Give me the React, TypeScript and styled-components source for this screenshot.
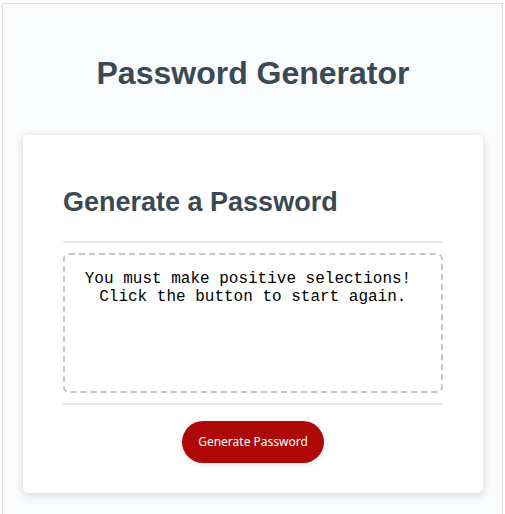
import React from "react";
import styled, { createGlobalStyle } from "styled-components";

const GlobalStyle = createGlobalStyle`
  html, body {
    margin: 0;
    padding: 0;
    background: #ffffff;
  }
  body {
    font-family: "Liberation Sans", Arial, sans-serif;
  }
  * { box-sizing: border-box; }
`;

const Frame = styled.div`
  margin: 3px 2px 0 2px;
  border: 1px solid #dedfe0;
  border-bottom: none;
  min-height: 511px;
  background: #f9fbfd;
`;

const Wrapper = styled.div`
  padding: 30px 19px 0 20px;
`;

const Header = styled.header`
  text-align: center;
  padding: 0 20px 21px 20px;
  color: hsl(206, 17%, 28%);
`;

const Title = styled.h1`
  font-size: 32px;
  font-weight: bold;
  margin: 21.44px 0;
  line-height: normal;
`;

const Card = styled.div`
  background: #ffffff;
  border-radius: 5px;
  box-shadow: rgba(0, 0, 0, 0.15) 0px 2px 8px 0px;
  color: hsl(206, 17%, 28%);
  font-size: 18px;
  margin: 0 auto;
  max-width: 800px;
  padding: 30px 40px;
`;

const Divider = styled.div`
  width: 100%;
  height: 2px;
  background: #e7e9eb;
`;

const CardTitle = styled.h2`
  font-size: 27px;
  font-weight: bold;
  margin: 22.4px 0;
  line-height: normal;
`;

const CardBody = styled.div`
  min-height: 100px;
`;

const PasswordBox = styled.textarea`
  appearance: none;
  display: block;
  width: 100%;
  height: 140px;
  margin: 10px 0;
  padding: 15px 20px 0 10px;
  font-family: "Liberation Mono", "Courier New", monospace;
  font-size: 16px;
  line-height: normal;
  color: #000000;
  text-align: center;
  border: 2px dashed #c0c7cf;
  border-radius: 6px;
  resize: none;
  overflow: hidden;
  background: #ffffff;
  outline: none;
`;

const CardFooter = styled.div`
  text-align: center;
`;

const Button = styled.button`
  border: none;
  background-color: hsl(360, 91%, 36%);
  border-radius: 25px;
  box-shadow: rgba(0, 0, 0, 0.1) 0px 1px 6px 0px;
  color: #ffffff;
  display: inline-block;
  font-family: "Noto Sans", "Open Sans", sans-serif;
  font-size: 12px;
  line-height: 22px;
  margin: 16px 0 0 0;
  padding: 10px 16px;
  cursor: pointer;
  vertical-align: top;
`;

const message = "You must make positive selections!\n Click the button to start again.";

export default function App() {
  return (
    <>
      <GlobalStyle />
      <Frame>
        <Wrapper>
          <Header>
            <Title>Password Generator</Title>
          </Header>
          <Card>
            <div>
              <CardTitle>Generate a Password</CardTitle>
              <Divider />
            </div>
            <CardBody>
              <PasswordBox readOnly value={message} aria-label="Generated Password" />
            </CardBody>
            <CardFooter>
              <Divider />
              <Button>Generate Password</Button>
            </CardFooter>
          </Card>
        </Wrapper>
      </Frame>
    </>
  );
}
